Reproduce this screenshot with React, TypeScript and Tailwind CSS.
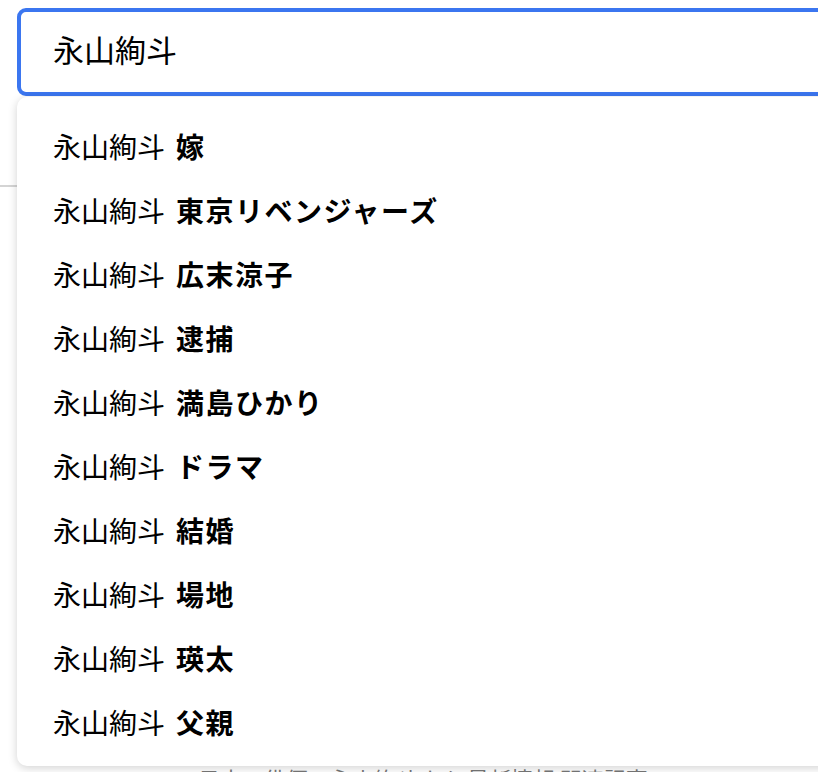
const query = "永山絢斗";

const suggestions = [
  "嫁",
  "東京リベンジャーズ",
  "広末涼子",
  "逮捕",
  "満島ひかり",
  "ドラマ",
  "結婚",
  "場地",
  "瑛太",
  "父親",
];

const font = { fontFamily: '"Noto Sans CJK JP", "Noto Sans", sans-serif' };

function SuggestionRow({ term }: { term: string }) {
  return (
    <li className="h-[64px] flex items-center pl-[36px] text-[28px] text-black cursor-pointer hover:bg-gray-50">
      <span>{query}</span>
      <span className="ml-[11px] font-bold tracking-[1.5px]">{term}</span>
    </li>
  );
}

export default function App() {
  return (
    <div className="relative w-[818px] h-[772px] overflow-hidden bg-white" style={font}>
      {/* page behind the dropdown */}
      <div className="h-[187px] border-b-2 border-[#d4d4d4]" />
      <div className="absolute top-[762px] left-[198px] text-[22px] text-[#777] whitespace-nowrap">
        日本の俳優・永山絢斗さん 最新情報 関連記事
      </div>

      {/* search box */}
      <div className="absolute top-[8px] left-[17px] w-[860px] h-[88px] border-4 border-[#3b76f0] rounded-[9px] bg-white flex items-center pl-[32px] pb-[6px]">
        <span className="text-[31px] text-black">{query}</span>
      </div>

      {/* suggestions */}
      <ul className="absolute top-[97px] left-[17px] w-[860px] bg-white rounded-[10px] pt-[17px] pb-[12px] shadow-[0_2px_10px_rgba(0,0,0,0.18)]">
        {suggestions.map(s => <SuggestionRow key={s} term={s} />)}
      </ul>
    </div>
  );
}
